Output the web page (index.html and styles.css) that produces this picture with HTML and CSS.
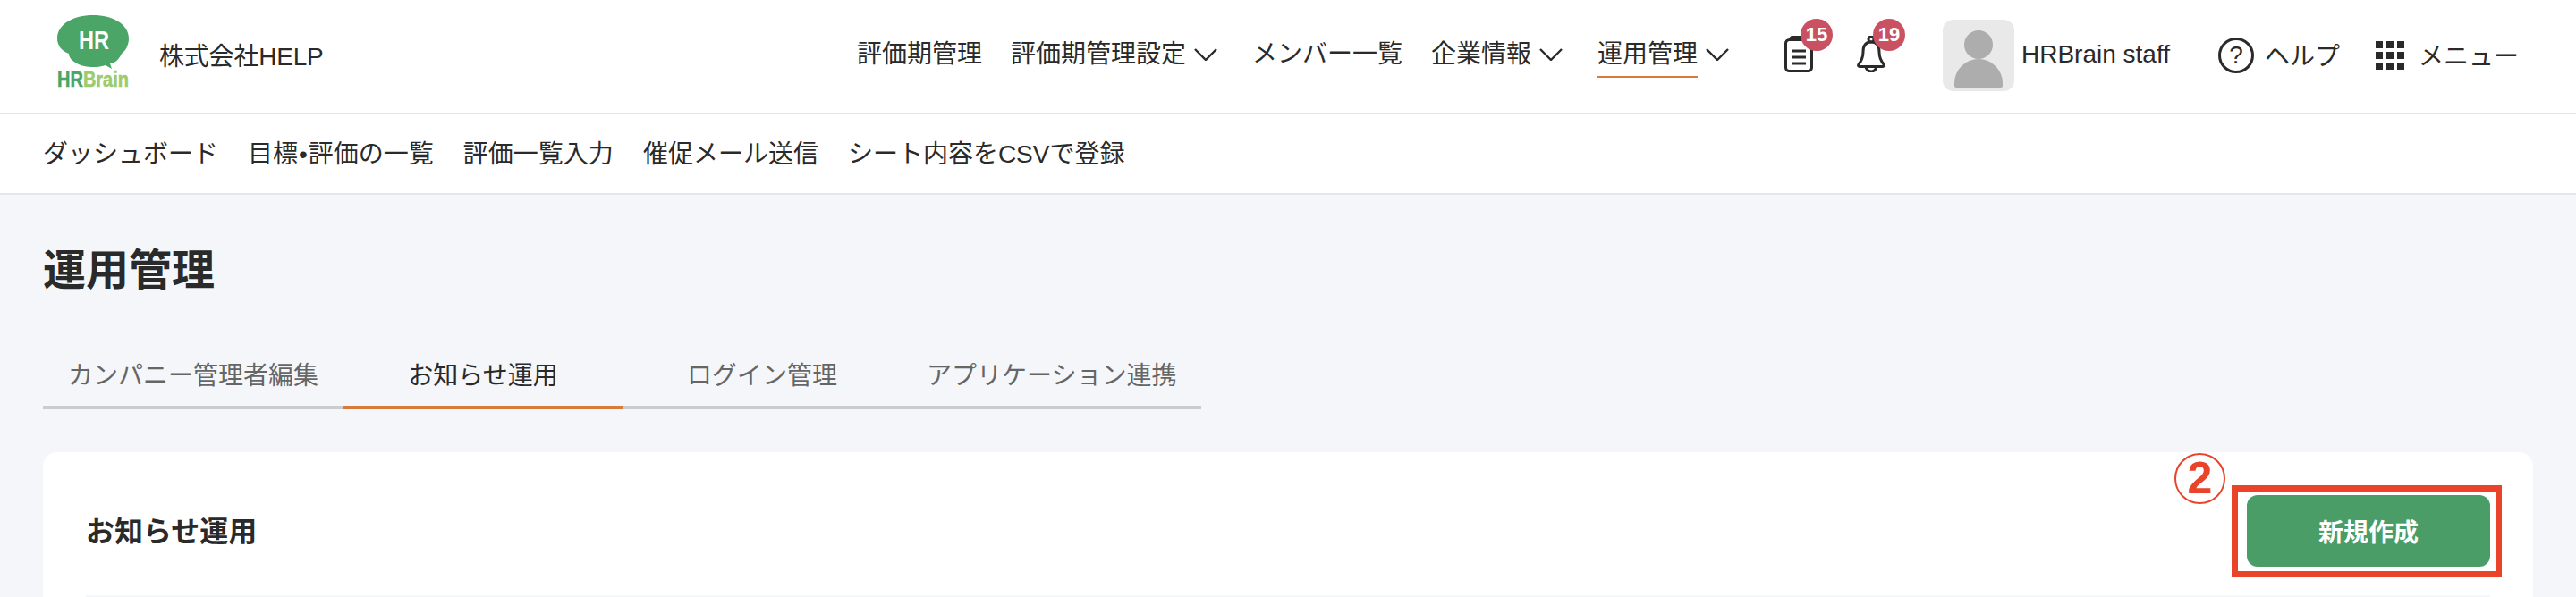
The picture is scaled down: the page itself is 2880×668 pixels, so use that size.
FILE: index.html
```html
<!DOCTYPE html>
<html lang="ja">

<head>
  <meta charset="UTF-8">
  <title>運用管理</title>
  <link rel="stylesheet" href="styles.css">
</head>

<body>
  <header class="top-bar">
    <svg class="logo" viewBox="0 0 80 80" role="img" aria-label="HRBrain">
      <path class="logo-bubble" d="M0 26C0 10 18 0 40 0C62 0 80 10 80 26C80 34 76 40 72 43C69 49 66 53 59 54L61 60L54 56C46 59 30 59 22 54C16 51 13 47 13 43C5 40 0 34 0 26Z" />
      <text class="logo-hr" x="24" y="38" textLength="34" lengthAdjust="spacingAndGlyphs">HR</text>
      <text class="logo-name" x="0" y="80" textLength="80" lengthAdjust="spacingAndGlyphs"><tspan class="logo-name-dark">HR</tspan><tspan class="logo-name-light">Brain</tspan></text>
    </svg>
    <span class="company-name">株式会社HELP</span>

    <nav class="global-nav">
      <a class="nav-item">評価期管理</a>
      <a class="nav-item">評価期管理設定<svg class="chevron" viewBox="0 0 26 14"><polyline points="1,1 13,13 25,1" /></svg></a>
      <a class="nav-item">メンバー一覧</a>
      <a class="nav-item">企業情報<svg class="chevron" viewBox="0 0 26 14"><polyline points="1,1 13,13 25,1" /></svg></a>
      <a class="nav-item is-current"><span class="nav-label">運用管理</span><svg class="chevron" viewBox="0 0 26 14"><polyline points="1,1 13,13 25,1" /></svg></a>
    </nav>

    <div class="tools">
      <div class="notify">
        <svg class="notify-icon" viewBox="0 0 32 41">
          <rect x="1.5" y="4.500" width="29" height="35" rx="4" />
          <path d="M7 4.500V3.500C7 2.400 7.900 1.500 9 1.500H18" />
          <path d="M8 17H24M8 24H24M8 31H24" />
        </svg>
        <span class="badge">15</span>
      </div>
      <div class="notify">
        <svg class="notify-icon" viewBox="0 0 32 41">
          <circle cx="16" cy="4" r="3" />
          <path d="M16 7C9 7 7 12 7 18C7 24 6 27 2 32C1 33.500 2 34.500 3 34.500H29C30 34.500 31 33.500 30 32C26 27 25 24 25 18C25 12 23 7 16 7Z" />
          <path d="M10 35C11 38 13 40 16 40C19 40 21 38 22 35" />
        </svg>
        <span class="badge">19</span>
      </div>
      <div class="user">
        <div class="avatar">
          <span class="avatar-head"></span>
          <span class="avatar-body"></span>
        </div>
        <span class="user-name">HRBrain staff</span>
      </div>
      <a class="tool-link tool-help"><span class="help-mark">?</span><span class="tool-text">ヘルプ</span></a>
      <a class="tool-link tool-menu">
        <span class="menu-grid">
          <i></i><i></i><i></i><i></i><i></i><i></i><i></i><i></i><i></i>
        </span><span class="tool-text">メニュー</span>
      </a>
    </div>
  </header>

  <nav class="sub-nav">
    <a>ダッシュボード</a>
    <a>目標<span class="dot">•</span>評価の一覧</a>
    <a>評価一覧入力</a>
    <a>催促メール送信</a>
    <a>シート内容をCSVで登録</a>
  </nav>

  <main class="main-content">
    <h1 class="page-title">運用管理</h1>

    <div class="tabs">
      <a class="tab">カンパニー管理者編集</a>
      <a class="tab is-active">お知らせ運用</a>
      <a class="tab">ログイン管理</a>
      <a class="tab">アプリケーション連携</a>
    </div>

    <section class="card">
      <div class="card-head">
        <h2 class="card-title">お知らせ運用</h2>
        <div class="new-wrap">
          <button class="new-button">新規作成</button>
          <!-- red annotation over the button -->
          <span class="mark-box"></span>
          <span class="mark-number">2</span>
        </div>
      </div>
    </section>
  </main>
</body>

</html>
```

FILE: styles.css
```css
html,
body {
  height: 100%;
}

body {
  margin: 0;
  overflow: hidden;
  font-family: "Liberation Sans", "Noto Sans CJK JP", sans-serif;
  font-size: 28px;
  color: #2a2a2a;
  background-color: #f4f6fa;
}

/* top bar */
.top-bar {
  display: flex;
  align-items: center;
  box-sizing: border-box;
  height: 128px;
  padding: 0 64px 2px;
  background-color: #fff;
  border-bottom: 2px solid #e5e5ec;
}

.logo {
  width: 80px;
  height: 80px;
  margin: 0 34px 10px 0;
  overflow: visible;
}

.logo-bubble {
  fill: #4ba567;
}

.logo-hr {
  font-size: 30px;
  font-weight: bold;
  fill: #fff;
}

.logo-name {
  font-size: 23px;
  font-weight: bold;
  stroke-width: 0.5;
}

.logo-name-dark {
  fill: #4ba567;
  stroke: #4ba567;
}

.logo-name-light {
  fill: #9ccb6b;
  stroke: #9ccb6b;
}

.company-name {
  margin-bottom: 2px;
  letter-spacing: -0.2px;
}

.global-nav {
  display: flex;
  align-items: center;
  gap: 32px;
  margin-left: auto;
  margin-bottom: 2px;
}

.nav-item {
  display: flex;
  align-items: center;
  line-height: 40px;
  white-space: nowrap;
}

.nav-label {
  position: relative;
}

.is-current .nav-label::after {
  content: "";
  position: absolute;
  left: 0;
  right: 0;
  bottom: -6px;
  height: 2px;
  background-color: #d67b3a;
}

.chevron {
  width: 26px;
  height: 14px;
  margin: 0 7px 0 9px;
  fill: none;
  stroke: #2a2a2a;
  stroke-width: 2.4;
}

.tools {
  display: flex;
  align-items: center;
  margin-left: 55px;
}

.notify {
  position: relative;
  width: 32px;
  height: 41px;
  margin-right: 49px;
  margin-bottom: 3px;
}

.notify + .notify {
  margin-right: 64px;
}

.notify-icon {
  display: block;
  width: 32px;
  height: 41px;
  fill: none;
  stroke: #2a2a2a;
  stroke-width: 3;
}

.badge {
  position: absolute;
  top: -19px;
  left: 18px;
  width: 36px;
  height: 36px;
  border-radius: 50%;
  background-color: #c95161;
  color: #fff;
  font-size: 22px;
  font-weight: bold;
  line-height: 36px;
  text-align: center;
}

.user {
  display: flex;
  align-items: center;
  gap: 8px;
}

.user-name,
.tool-text {
  margin-bottom: 2px;
}

.avatar {
  display: flex;
  flex-direction: column;
  align-items: center;
  justify-content: flex-end;
  width: 80px;
  height: 80px;
  padding-bottom: 4px;
  box-sizing: border-box;
  border-radius: 12px;
  background-color: #e9e9e9;
}

.avatar-head {
  width: 32px;
  height: 32px;
  border-radius: 50%;
  background-color: #adadad;
}

.avatar-body {
  width: 54px;
  height: 32px;
  border-radius: 27px 27px 2px 2px;
  background-color: #adadad;
}

.tool-link {
  display: flex;
  align-items: center;
  white-space: nowrap;
}

.tool-help {
  gap: 12px;
  margin-left: 54px;
}

.help-mark {
  display: block;
  width: 40px;
  height: 40px;
  box-sizing: border-box;
  border: 3px solid #2a2a2a;
  border-radius: 50%;
  font-size: 28px;
  line-height: 34px;
  text-align: center;
}

.tool-menu {
  gap: 16px;
  margin-left: 40px;
}

.menu-grid {
  display: grid;
  grid-template-columns: repeat(3, 8px);
  grid-auto-rows: 8px;
  gap: 4px;
}

.menu-grid i {
  background-color: #2a2a2a;
}

/* second row */
.sub-nav {
  display: flex;
  align-items: center;
  gap: 33px;
  height: 84px;
  padding: 0 0 4px 48px;
  background-color: #fff;
  border-bottom: 2px solid #e5e5ec;
}

.dot {
  margin: 0 1px;
}

.main-content {
  padding: 49px 48px 0;
}

.page-title {
  margin: 0 0 46px;
  font-size: 48px;
  font-weight: bold;
  line-height: 72px;
}

.tabs {
  display: flex;
  width: 1296px;
  margin-bottom: 48px;
}

.tab {
  box-sizing: border-box;
  min-width: 312px;
  padding: 15px 28px 12px;
  border-bottom: 4px solid #cbccd0;
  color: #666;
  line-height: 42px;
  text-align: center;
}

.tab.is-active {
  border-bottom-color: #d67b3a;
  color: #2a2a2a;
}

/* the card carries on below the fold, only its top is on screen */
.card {
  padding: 0 48px;
  border-radius: 16px 16px 0 0;
  background-color: #fff;
}

.card-head {
  display: flex;
  align-items: center;
  justify-content: space-between;
  padding: 48px 0 32px;
  border-bottom: 2px solid #f4f6fa;
}

.card-title {
  margin: 0 0 4px;
  font-size: 32px;
  font-weight: bold;
}

.new-wrap {
  position: relative;
}

.new-button {
  display: block;
  width: 272px;
  height: 80px;
  border: 0;
  border-radius: 12px;
  background-color: #4a9d66;
  color: #fff;
  font-family: inherit;
  font-size: 28px;
  font-weight: bold;
}

.mark-box {
  position: absolute;
  top: -11px;
  left: -17px;
  right: -13px;
  bottom: -12px;
  border: 7px solid #e9432a;
}

.mark-number {
  position: absolute;
  top: -47px;
  left: -81px;
  width: 57px;
  height: 57px;
  box-sizing: border-box;
  border: 2px solid #e9432a;
  border-radius: 50%;
  color: #e9432a;
  font-size: 50px;
  font-weight: bold;
  line-height: 53px;
  text-align: center;
}
```
